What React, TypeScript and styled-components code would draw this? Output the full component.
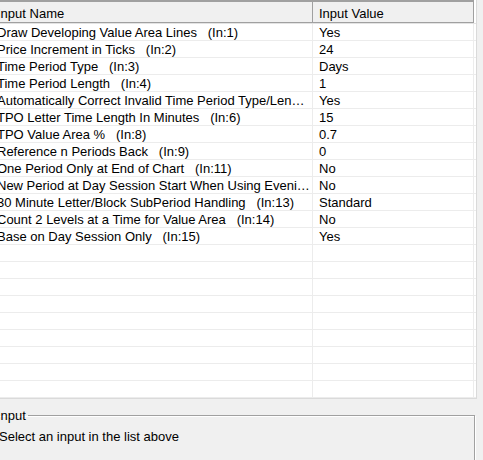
import React from 'react';
import styled, { createGlobalStyle } from 'styled-components';

type InputRow = { name: string; value: string };

const inputs: InputRow[] = [
  { name: 'Draw Developing Value Area Lines   (In:1)', value: 'Yes' },
  { name: 'Price Increment in Ticks   (In:2)', value: '24' },
  { name: 'Time Period Type   (In:3)', value: 'Days' },
  { name: 'Time Period Length   (In:4)', value: '1' },
  { name: 'Automatically Correct Invalid Time Period Type/Length   (In:5)', value: 'Yes' },
  { name: 'TPO Letter Time Length In Minutes   (In:6)', value: '15' },
  { name: 'TPO Value Area %   (In:8)', value: '0.7' },
  { name: 'Reference n Periods Back   (In:9)', value: '0' },
  { name: 'One Period Only at End of Chart   (In:11)', value: 'No' },
  { name: 'New Period at Day Session Start When Using Evening Session   (In:12)', value: 'No' },
  { name: '30 Minute Letter/Block SubPeriod Handling   (In:13)', value: 'Standard' },
  { name: 'Count 2 Levels at a Time for Value Area   (In:14)', value: 'No' },
  { name: 'Base on Day Session Only   (In:15)', value: 'Yes' },
];

const TOTAL_ROWS = 22;

const GlobalStyle = createGlobalStyle`
  html, body {
    margin: 0;
    padding: 0;
    background: #f0f0f0;
    overflow: hidden;
  }
  body {
    font-family: "Liberation Sans", Arial, sans-serif;
    font-size: 13px;
    color: #000;
  }
`;

const App = () => {
  const blanks = Array.from({ length: TOTAL_ROWS - inputs.length });

  return (
    <>
      <GlobalStyle />
      <Dialog>
        <ListView>
          <HeaderRow>
            <HeaderCell $first>Input Name</HeaderCell>
            <HeaderCell>Input Value</HeaderCell>
            <HeaderFiller />
          </HeaderRow>
          {inputs.map((row, i) => (
            <Row key={i}>
              <Cell $first>{row.name}</Cell>
              <Cell>{row.value}</Cell>
              <Filler />
            </Row>
          ))}
          {blanks.map((_, i) => (
            <Row key={`blank-${i}`}>
              <Cell $first />
              <Cell />
              <Filler />
            </Row>
          ))}
        </ListView>
        <GroupBox>
          <Legend>Input</Legend>
          <Description>Select an input in the list above</Description>
        </GroupBox>
      </Dialog>
    </>
  );
};

const Dialog = styled.div`
  width: 491px;
  height: 460px;
  margin-left: -8px;
  display: flex;
  flex-direction: column;
`;

const ListView = styled.div`
  width: 484px;
  background: #fff;
  border-right: 1px solid #dadada;
  border-bottom: 1px solid #dadada;
  display: flex;
  flex-direction: column;
`;

const HeaderRow = styled.div`
  display: grid;
  grid-template-columns: 321px 161px 1fr;
  height: 24px;
  border-bottom: 1px solid #e3e3e3;
  box-sizing: border-box;
`;

const HeaderCell = styled.div<{ $first?: boolean }>`
  background: #f0f0f0;
  border-top: 2px solid #a0a0a0;
  border-right: 1px solid #a0a0a0;
  border-bottom: 1px solid #a0a0a0;
  box-sizing: border-box;
  padding: 3px 6px 0 ${(p) => (p.$first ? '5px' : '6px')};
  line-height: 17px;
  white-space: nowrap;
  overflow: hidden;
`;

const HeaderFiller = styled.div`
  background: #fff;
`;

const Row = styled.div`
  display: grid;
  grid-template-columns: 321px 161px 1fr;
  height: 17px;
  box-sizing: border-box;
  border-bottom: 1px solid #ececec;
`;

const Cell = styled.div<{ $first?: boolean }>`
  padding: 2px 2px 0 ${(p) => (p.$first ? '5px' : '6px')};
  line-height: 14px;
  white-space: pre;
  overflow: hidden;
  text-overflow: ellipsis;
  border-right: 1px solid #ececec;
`;

const Filler = styled.div``;

const GroupBox = styled.fieldset`
  margin: 9px 0 0 0;
  padding: 0 0 0 6px;
  width: 483px;
  box-sizing: border-box;
  flex: 1;
  border: 1px solid #a0a0a0;
  border-bottom: none;
  box-shadow: 1px 1px 0 #fff, inset 1px 1px 0 #fff;
  min-width: 0;
`;

const Legend = styled.legend`
  padding: 0 2px 0 0;
  margin-left: -2px;
  line-height: 15px;
`;

const Description = styled.div`
  padding-top: 6px;
  line-height: 16px;
`;

export default App;
